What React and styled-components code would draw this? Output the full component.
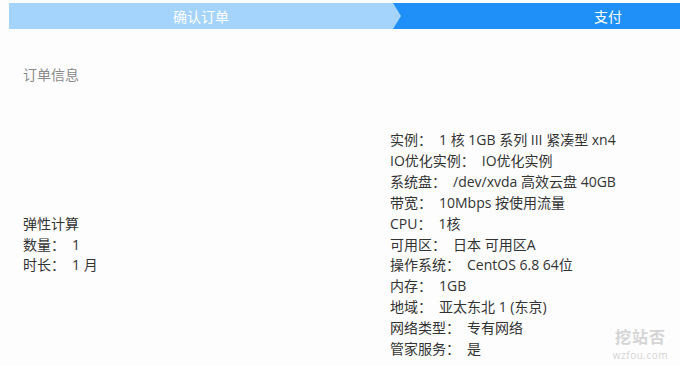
import React from 'react';
import styled, { createGlobalStyle } from 'styled-components';

const GlobalStyle = createGlobalStyle`
  html, body {
    margin: 0;
    padding: 0;
    background: #fdfdfd;
    font-family: "Open Sans", "Noto Sans CJK SC", sans-serif;
  }
`;

const specs = [
  ['实例', '1 核 1GB 系列 III 紧凑型 xn4'],
  ['IO优化实例', 'IO优化实例'],
  ['系统盘', '/dev/xvda 高效云盘 40GB'],
  ['带宽', '10Mbps 按使用流量'],
  ['CPU', '1核'],
  ['可用区', '日本 可用区A'],
  ['操作系统', 'CentOS 6.8 64位'],
  ['内存', '1GB'],
  ['地域', '亚太东北 1 (东京)'],
  ['网络类型', '专有网络'],
  ['管家服务', '是'],
];

const App = () => {
  return (
    <Page>
      <GlobalStyle />
      <StepBar>
        <Step done>确认订单</Step>
        <Step>支付</Step>
      </StepBar>
      <SectionTitle>订单信息</SectionTitle>
      <Info>
        <Column>
          <Line>弹性计算</Line>
          <Line>
            <Label>数量：</Label>1
          </Line>
          <Line>
            <Label>时长：</Label>1 月
          </Line>
        </Column>
        <Column>
          {specs.map(([k, v]) => (
            <Line key={k}>
              <Label>{k}：</Label>
              {v}
            </Line>
          ))}
        </Column>
      </Info>
      <Watermark>
        <Mark>挖站否</Mark>
        <Site>wzfou.com</Site>
      </Watermark>
    </Page>
  );
};

const Page = styled.div`
  position: relative;
  width: 680px;
  height: 366px;
  overflow: hidden;
  padding: 3px 0 0 9px;
  box-sizing: border-box;
`;

const StepBar = styled.div`
  display: flex;
  height: 26px;
`;

const Step = styled.div`
  display: flex;
  align-items: center;
  height: 100%;
  font-size: 14px;
  color: #fff;
  ${(p) =>
    p.done
      ? `
    position: relative;
    z-index: 1;
    width: 392px;
    margin-right: -8px;
    justify-content: center;
    padding-right: 8px;
    box-sizing: border-box;
    background: #a4d4fc;
    clip-path: polygon(0 0, calc(100% - 8px) 0, 100% 50%, calc(100% - 8px) 100%, 0 100%);
  `
      : `
    flex: 1;
    padding-left: 201px;
    background: #1e90f8;
  `}
`;

const SectionTitle = styled.div`
  margin: 35px 0 0 14px;
  font-size: 14px;
  line-height: 21px;
  color: #8a8a8a;
`;

const Info = styled.div`
  display: grid;
  grid-template-columns: 367px 1fr;
  align-items: center;
  margin: 45px 0 0 14px;
`;

const Column = styled.div`
  display: flex;
  flex-direction: column;
`;

const Line = styled.div`
  font-size: 14px;
  line-height: 20.9px;
  color: #333;
  white-space: nowrap;
`;

const Label = styled.span`
  margin-right: 7px;
`;

const Watermark = styled.div`
  position: absolute;
  right: 12px;
  bottom: 5px;
  display: flex;
  flex-direction: column;
  align-items: center;
  gap: 3px;
  color: #d4d4d4;
`;

const Mark = styled.div`
  font-size: 16px;
  font-weight: 700;
  line-height: 17px;
  letter-spacing: 1px;
`;

const Site = styled.div`
  font-size: 10px;
  line-height: 12px;
  letter-spacing: 0.5px;
`;

export default App;
